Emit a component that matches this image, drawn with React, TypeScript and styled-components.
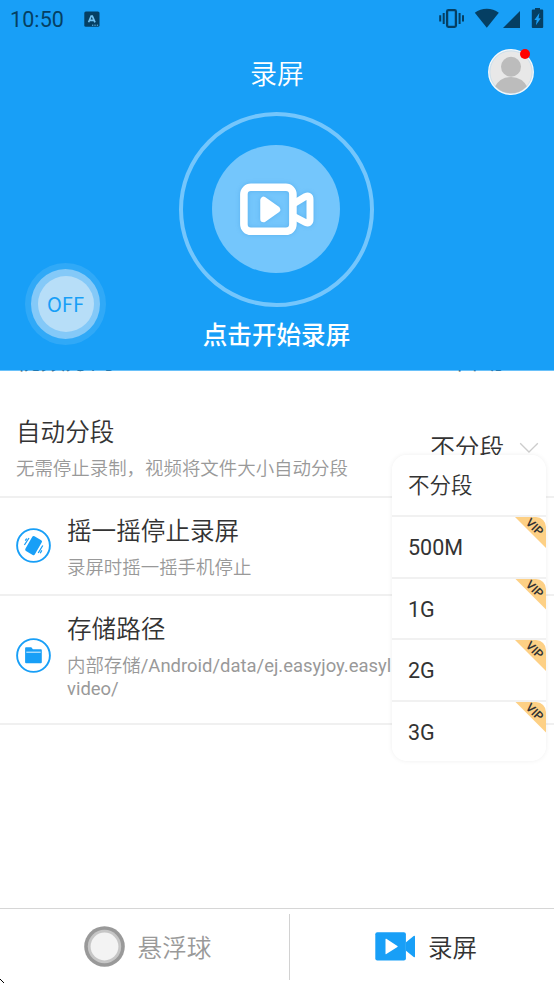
import React from "react";
import styled, { createGlobalStyle } from "styled-components";

const GlobalStyle = createGlobalStyle`
  * { box-sizing: border-box; }
  body { margin: 0; background: #fff; overflow: hidden; }
`;

const BLUE = "#189ff7";
const DARK = "#053f63";

const Screen = styled.div`
  position: relative;
  display: flex;
  flex-direction: column;
  width: 554px;
  height: 984px;
  overflow: hidden;
  background: #fff;
  color: #333;
  font-family: Roboto, "Noto Sans CJK SC", sans-serif;
`;

const Header = styled.header`
  position: relative;
  z-index: 1;
  flex: none;
  height: 371px;
  background: ${BLUE};
  background-clip: padding-box;
  border-bottom: 1px solid rgba(24, 159, 247, 0.65);
  display: flex;
  flex-direction: column;
  align-items: center;
`;

const StatusBar = styled.div`
  align-self: stretch;
  display: flex;
  align-items: center;
  height: 38px;
  padding: 0 9px 0 10px;
  color: ${DARK};
`;

const Clock = styled.span`
  width: 74px;
  font-size: 21.5px;
  line-height: 38px;
  padding-top: 2px;
  letter-spacing: 0.1px;
`;

const StatusIcons = styled.div`
  margin-left: auto;
  display: flex;
  height: 38px;
`;

const TitleBar = styled.div`
  align-self: stretch;
  display: grid;
  grid-template-columns: 1fr auto 1fr;
  align-items: center;
  height: 68px;
  padding: 0 20px;
`;

const Title = styled.h1`
  grid-column: 2;
  margin: 0;
  padding-top: 5px;
  font-size: 27px;
  font-weight: 350;
  line-height: 40px;
  color: #fff;
`;

const Avatar = styled.div`
  position: relative;
  justify-self: end;
  width: 46px;
  height: 46px;
  svg { display: block; }
`;

const Badge = styled.i`
  position: absolute;
  top: 0;
  right: 4px;
  width: 10px;
  height: 10px;
  border-radius: 50%;
  background: #f00;
`;

const RecordButton = styled.button`
  flex: none;
  display: flex;
  align-items: center;
  justify-content: center;
  width: 195px;
  height: 195px;
  margin: 6px 0 0 -2px;
  padding: 0;
  border: 4px solid #74c6fc;
  border-radius: 50%;
  background: none;
`;

const RecordDisc = styled.span`
  display: flex;
  align-items: center;
  justify-content: center;
  width: 128px;
  height: 128px;
  margin-bottom: 1px;
  padding-left: 2px;
  border-radius: 50%;
  background: #74c6fc;
  svg { filter: drop-shadow(0 0 2px rgba(30, 130, 210, 0.3)); }
`;

const Caption = styled.p`
  margin: 11px 0 0 -1px;
  font-size: 24.6px;
  font-weight: 500;
  line-height: 36px;
  color: #fff;
`;

const FloatingToggle = styled.button`
  position: absolute;
  left: 25px;
  top: 263px;
  width: 81px;
  height: 82px;
  padding: 0;
  display: flex;
  align-items: center;
  justify-content: center;
  border: 6px solid #30a9f7;
  border-radius: 50%;
  background: #84c9f8;
`;

const ToggleFace = styled.span`
  display: flex;
  align-items: center;
  justify-content: center;
  width: 56px;
  height: 56px;
  border-radius: 50%;
  background: #b7def8;
  color: ${BLUE};
  font: 20px/54px "Noto Sans CJK SC", sans-serif;
`;

const Settings = styled.main`
  flex: 1;
  min-height: 0;
  margin-top: -1px;
  overflow: hidden;
`;

const Row = styled.section<{ $height: number; $top: number; $scrolled?: boolean }>`
  display: flex;
  height: ${(p) => p.$height}px;
  margin-top: ${(p) => (p.$scrolled ? -42 : 0)}px;
  padding: ${(p) => p.$top}px 16px 0;
  border-bottom: ${(p) => (p.$scrolled ? "none" : "2px solid #f0f0f0")};
`;

const RowIcon = styled.span<{ $top: number }>`
  flex: none;
  width: 51px;
  padding-top: ${(p) => p.$top}px;
  svg { display: block; }
`;

const RowText = styled.div<{ $wide?: boolean }>`
  width: ${(p) => (p.$wide ? "400px" : "auto")};
`;

const RowTitle = styled.h2`
  margin: 0;
  font-size: 24.6px;
  font-weight: 350;
  line-height: 36px;
  white-space: nowrap;
`;

const RowNote = styled.p`
  margin: 7px 0 0;
  font-size: 18.46px;
  font-weight: 350;
  line-height: 23px;
  color: #999;
`;

const Path = styled.span`
  font-weight: 400;
`;

const RowValue = styled.div<{ $offset: number }>`
  display: flex;
  align-items: center;
  gap: 15px;
  margin-left: auto;
  margin-right: -1px;
  height: 36px;
  margin-top: ${(p) => p.$offset}px;
  font-size: 24.6px;
  font-weight: 350;
  line-height: 36px;
`;

const Menu = styled.ul`
  position: absolute;
  z-index: 2;
  left: 392px;
  top: 455px;
  width: 154px;
  margin: 0;
  padding: 0;
  list-style: none;
  border-radius: 15px;
  overflow: hidden;
  background: #fff;
`;

const MenuShadow = styled.div`
  position: absolute;
  z-index: 1;
  left: 392px;
  top: 455px;
  width: 154px;
  height: 306px;
  border-radius: 15px;
  box-shadow: 0 0 5px rgba(0, 0, 0, 0.07);
`;

const MenuItem = styled.li`
  position: relative;
  height: 61.5px;
  padding-left: 16px;
  font-size: 21.5px;
  line-height: 61px;
  &:first-child { height: 60px; font-weight: 350; }
  & + & { border-top: 2px solid #f1f1f1; }
`;

const Ribbon = styled.span`
  position: absolute;
  top: 0;
  right: 0;
  width: 31px;
  height: 31px;
  border-top-right-radius: 10px;
  background: #fdd085;
  clip-path: polygon(0 0, 100% 0, 100% 100%);
`;

const RibbonLabel = styled.b`
  position: absolute;
  left: 4px;
  top: 3px;
  width: 31px;
  font-size: 12px;
  font-weight: 500;
  line-height: 14px;
  text-align: center;
  transform: rotate(45deg);
`;

const TabBar = styled.nav`
  flex: none;
  display: flex;
  align-items: center;
  height: 76px;
  border-top: 1px solid #d6d6d6;
  background: #fff;
`;

const Tab = styled.button<{ $active?: boolean }>`
  display: flex;
  align-items: center;
  justify-content: center;
  gap: ${(p) => (p.$active ? 12 : 13)}px;
  flex: ${(p) => (p.$active ? "1" : "none")};
  width: 290px;
  height: 66px;
  padding: ${(p) => (p.$active ? "0 0 0 8px" : "0 0 0 6px")};
  border: 0;
  border-right: ${(p) => (p.$active ? "0" : "1px solid #d2d2d2")};
  background: none;
  color: ${(p) => (p.$active ? "#333" : "#999")};
  font: 350 24.6px/36px Roboto, "Noto Sans CJK SC", sans-serif;
`;

const TabLabel = styled.span`
  padding-top: 4px;
`;

const CornerMark = styled.svg`
  position: absolute;
  left: 0;
  bottom: 0;
`;

const StorageBadge = () => (
  <svg width="16" height="16" viewBox="0 0 16 16" fill={DARK}>
    <rect x="0.3" y="0.5" width="15.2" height="15.3" rx="1.6" />
    <path d="M4.6 11.3 7.2 5h1.1l2.7 6.3M5.8 9.3h4" fill="none" stroke="#72c2f2" strokeWidth="1.7" />
    <path d="M8 14.2h1.3M10.4 14.2h1.3M12.8 14.2h1.3" stroke="#72c2f2" strokeWidth="1" />
  </svg>
);

const SystemIcons = () => (
  <svg width="108" height="38" viewBox="0 0 108 38" fill={DARK}>
    <g fill="none" stroke={DARK} strokeWidth="2">
      <rect x="10.1" y="10.2" width="8.8" height="16.6" rx="1.3" strokeWidth="2.3" />
      <path d="M6.7 13v11M3.2 15.2v6.4M22.6 13v11M26 15.2v6.4" />
    </g>
    <path d="M37.8 12.8c6.8-5.3 17.2-5.3 24 0L49.8 27.8z" />
    <path d="M83 11v17H66z" />
    <path fillRule="evenodd" d="M98 9.5V8h5v1.5h2.2q1 0 1 1V27q0 1-1 1h-9.4q-1 0-1-1V10.5q0-1 1-1zM102.4 13l-5 7h2.3l-.8 5.2 4.9-7h-2.2z" />
  </svg>
);

const Person = () => (
  <svg width="46" height="46" viewBox="0 0 46 46">
    <clipPath id="avatar-face"><circle cx="23" cy="23" r="21.3" /></clipPath>
    <circle cx="23" cy="23" r="22.2" fill="#e8e8e8" stroke="#f5f8fa" strokeWidth="1.5" />
    <circle cx="23" cy="23" r="21.2" fill="none" stroke="#a9d3ed" strokeWidth="0.5" />
    <g clipPath="url(#avatar-face)" fill="#bcbcbc">
      <circle cx="23" cy="17.8" r="10" />
      <path d="M6 39q5.5-11 17-11t17 11l-7 7H13z" />
    </g>
  </svg>
);

const Camcorder = () => (
  <svg width="76" height="54" viewBox="0 0 76 54" fill="none" stroke="#fff" strokeLinejoin="round">
    <rect x="4.9" y="5.3" width="49" height="44" rx="7" strokeWidth="7.6" />
    <path d="M55 21.5 66.5 14.5Q71 13 71 17.5V37.5Q71 42 66.5 40.5L55 34.5" strokeWidth="7" />
    <path d="M24.5 18v19l13.5-9.5z" fill="#fff" strokeWidth="6.5" />
  </svg>
);

const RingIcon = ({ children }: { children: React.ReactNode }) => (
  <svg width="35" height="35" viewBox="0 0 35 35" fill={BLUE}>
    <circle cx="17.5" cy="17.5" r="16.4" fill="none" stroke={BLUE} strokeWidth="1.9" />
    {children}
  </svg>
);

const ShakeGlyph = () => (
  <RingIcon>
    <rect x="12.1" y="9.1" width="11" height="17" rx="1.6" transform="rotate(30 17.6 17.6)" />
    <path d="M13 10 8.4 17M10.7 10.5l-1.4 2.2M26.8 17.5 22.2 25M25.8 22.4l-1.6 2.8" fill="none" stroke={BLUE} strokeWidth="1.3" />
  </RingIcon>
);

const FolderGlyph = () => (
  <RingIcon>
    <path d="M10 9.3h5.3l1.6 2H25q.8 0 .8.8v12.1q0 1-1 1H10.1q-1 0-1-1V10.2q0-.9.9-.9z" />
    <path d="M10.3 14.2h14.4" stroke="#d5edfd" strokeWidth="1.1" />
  </RingIcon>
);

const ChevronSvg = styled.svg`
  margin-bottom: 3px;
`;

const Chevron = () => (
  <ChevronSvg width="20" height="12" viewBox="0 0 20 12" fill="none" stroke="#ccc" strokeWidth="1.3">
    <path d="M1.2 1.3 10 10l8.8-8.7" />
  </ChevronSvg>
);

const BallIcon = () => (
  <svg width="41" height="41" viewBox="0 0 41 41">
    <circle cx="20.5" cy="20.5" r="20.3" fill="#999" />
    <circle cx="20.5" cy="20.5" r="16.7" fill="#c6c6c6" />
    <circle cx="20.5" cy="20.5" r="13.9" fill="#f3f3f3" />
  </svg>
);

const VideoIcon = () => (
  <svg width="41" height="29" viewBox="0 0 41 29" fill={BLUE}>
    <rect x="0.3" y="0.3" width="30.6" height="28.2" rx="2" />
    <path d="M31 10.2 38.7 4q1.3-.8 1.3.5v20q0 1.3-1.3.5L31 18.7z" />
    <path d="M10.5 7.2v14.6q0 .8.8.3L22.4 15q.7-.5 0-1L11.3 6.8q-.8-.4-.8.4z" fill="#fff" />
  </svg>
);

const sizes = ["不分段", "500M", "1G", "2G", "3G"];

export default function App() {
  return (
    <Screen>
      <GlobalStyle />
      <Header>
        <StatusBar>
          <Clock>10:50</Clock>
          <StorageBadge />
          <StatusIcons><SystemIcons /></StatusIcons>
        </StatusBar>
        <TitleBar>
          <Title>录屏</Title>
          <Avatar><Person /><Badge /></Avatar>
        </TitleBar>
        <RecordButton>
          <RecordDisc><Camcorder /></RecordDisc>
        </RecordButton>
        <Caption>点击开始录屏</Caption>
        <FloatingToggle><ToggleFace>OFF</ToggleFace></FloatingToggle>
      </Header>

      <Settings>
        <Row $height={74} $top={15} $scrolled>
          <RowText><RowTitle>视频方向</RowTitle></RowText>
          <RowValue $offset={0}>自动<Chevron /></RowValue>
        </Row>
        <Row $height={96} $top={13}>
          <RowText>
            <RowTitle>自动分段</RowTitle>
            <RowNote>无需停止录制，视频将文件大小自动分段</RowNote>
          </RowText>
          <RowValue $offset={16}>不分段<Chevron /></RowValue>
        </Row>
        <Row $height={98} $top={16}>
          <RowIcon $top={14}><ShakeGlyph /></RowIcon>
          <RowText>
            <RowTitle>摇一摇停止录屏</RowTitle>
            <RowNote>录屏时摇一摇手机停止</RowNote>
          </RowText>
        </Row>
        <Row $height={129} $top={16}>
          <RowIcon $top={26}><FolderGlyph /></RowIcon>
          <RowText $wide>
            <RowTitle>存储路径</RowTitle>
            <RowNote>内部存储<Path>/Android/data/ej.easyjoy.easyl<br />video/</Path></RowNote>
          </RowText>
        </Row>
      </Settings>

      <TabBar>
        <Tab><BallIcon /><TabLabel>悬浮球</TabLabel></Tab>
        <Tab $active><VideoIcon /><TabLabel>录屏</TabLabel></Tab>
      </TabBar>

      <MenuShadow />
      <Menu>
        {sizes.map((label, i) => (
          <MenuItem key={label}>
            {label}
            {i > 0 && <Ribbon><RibbonLabel>VIP</RibbonLabel></Ribbon>}
          </MenuItem>
        ))}
      </Menu>
      <CornerMark width="5" height="5" viewBox="0 0 5 5">
        <path d="M0 0h1v1h1v1h1v1h1v1H3V3H2V2H1V1H0z" fill="#000" />
      </CornerMark>
    </Screen>
  );
}
